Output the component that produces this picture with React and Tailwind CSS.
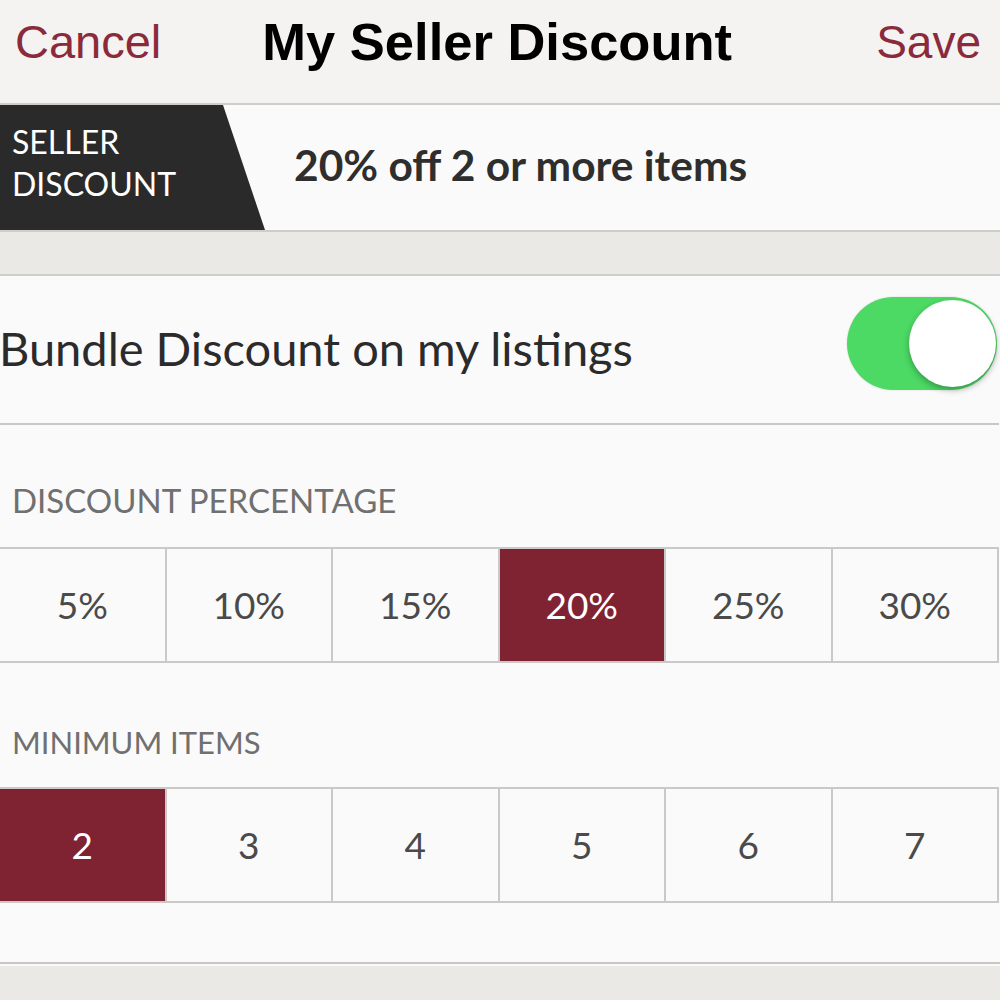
export default function App() {
  const body = { fontFamily: "Lato, 'Open Sans', sans-serif" };
  const pcts = ["5%", "10%", "15%", "20%", "25%", "30%"];
  const items = ["2", "3", "4", "5", "6", "7"];
  const Row = ({ values, sel }) => (
    <div className="grid w-[999px] grid-cols-6 border-y-2 border-[#cbc9c7] h-[116px]">
      {values.map((v, i) => (
        <div
          key={v}
          className={
            "flex items-center justify-center text-[37px] border-r-2 border-[#cbc9c7] " +
            (i === sel ? "bg-[#7f2231] text-white" : "text-[#4a4a4a]")
          }
        >
          {v}
        </div>
      ))}
    </div>
  );
  return (
    <div className="w-[1000px] h-[1000px] overflow-hidden bg-[#ebe9e6]" style={body}>
      <div
        className="h-[105px] bg-[#f4f3f1] border-b-2 border-[#cfcdca] flex items-start pt-[12px] pl-[15px] pr-[19px]"
        style={{ fontFamily: "'Liberation Sans', Arial, sans-serif" }}
      >
        <span className="text-[47px] text-[#8a2a3b] leading-[60px]">Cancel</span>
        <span className="text-[52.5px] font-bold text-black leading-[60px] ml-[101px]">My Seller Discount</span>
        <span className="text-[46px] text-[#8a2a3b] leading-[60px] ml-auto">Save</span>
      </div>
      <div className="h-[127px] bg-[#fbfafa] border-b-2 border-[#cfcdca] flex items-stretch">
        <div className="w-[265px] bg-[#2a2a2a] [clip-path:polygon(0_0,223px_0,265px_100%,0_100%)] flex flex-col justify-center pl-[12px] pb-[10px] text-white text-[32px] leading-[42px]">
          <span>SELLER</span>
          <span>DISCOUNT</span>
        </div>
        <div className="flex items-center pl-[29px] text-[42.5px] font-bold text-[#2e2e2e] pb-[6px]">
          20% off 2 or more items
        </div>
      </div>
      <div className="h-[44px] border-b-2 border-[#cfcdca] bg-[#ebe9e6]" />
      <div className="bg-[#fbfafa] h-[690px]">
        <div className="h-[149px] flex items-center justify-between border-b-2 border-[#c9c7c4] w-[999px] pr-[2px]">
          <span className="text-[47px] text-[#2b2b2b] -ml-[1px] pb-[2px]">Bundle Discount on my listings</span>
          <div className="w-[150px] h-[93px] mb-[13px] rounded-full bg-[#4cd964] flex items-center justify-end pr-[1px] shadow-[0_0_2px_rgba(0,0,0,0.15)]">
            <div className="w-[87px] h-[87px] rounded-full bg-white shadow-[0_3px_6px_rgba(0,0,0,0.3)]" />
          </div>
        </div>
        <div className="h-[122px] flex items-end pb-[22px] pl-[12px] text-[33px] text-[#707070]">
          DISCOUNT PERCENTAGE
        </div>
        <Row values={pcts} sel={3} />
        <div className="h-[124px] flex items-end pb-[22px] pl-[12px] text-[31px] text-[#707070]">
          MINIMUM ITEMS
        </div>
        <Row values={items} sel={0} />
        <div className="h-[61px] border-b-2 border-[#c9c7c4]" />
      </div>
    </div>
  );
}
